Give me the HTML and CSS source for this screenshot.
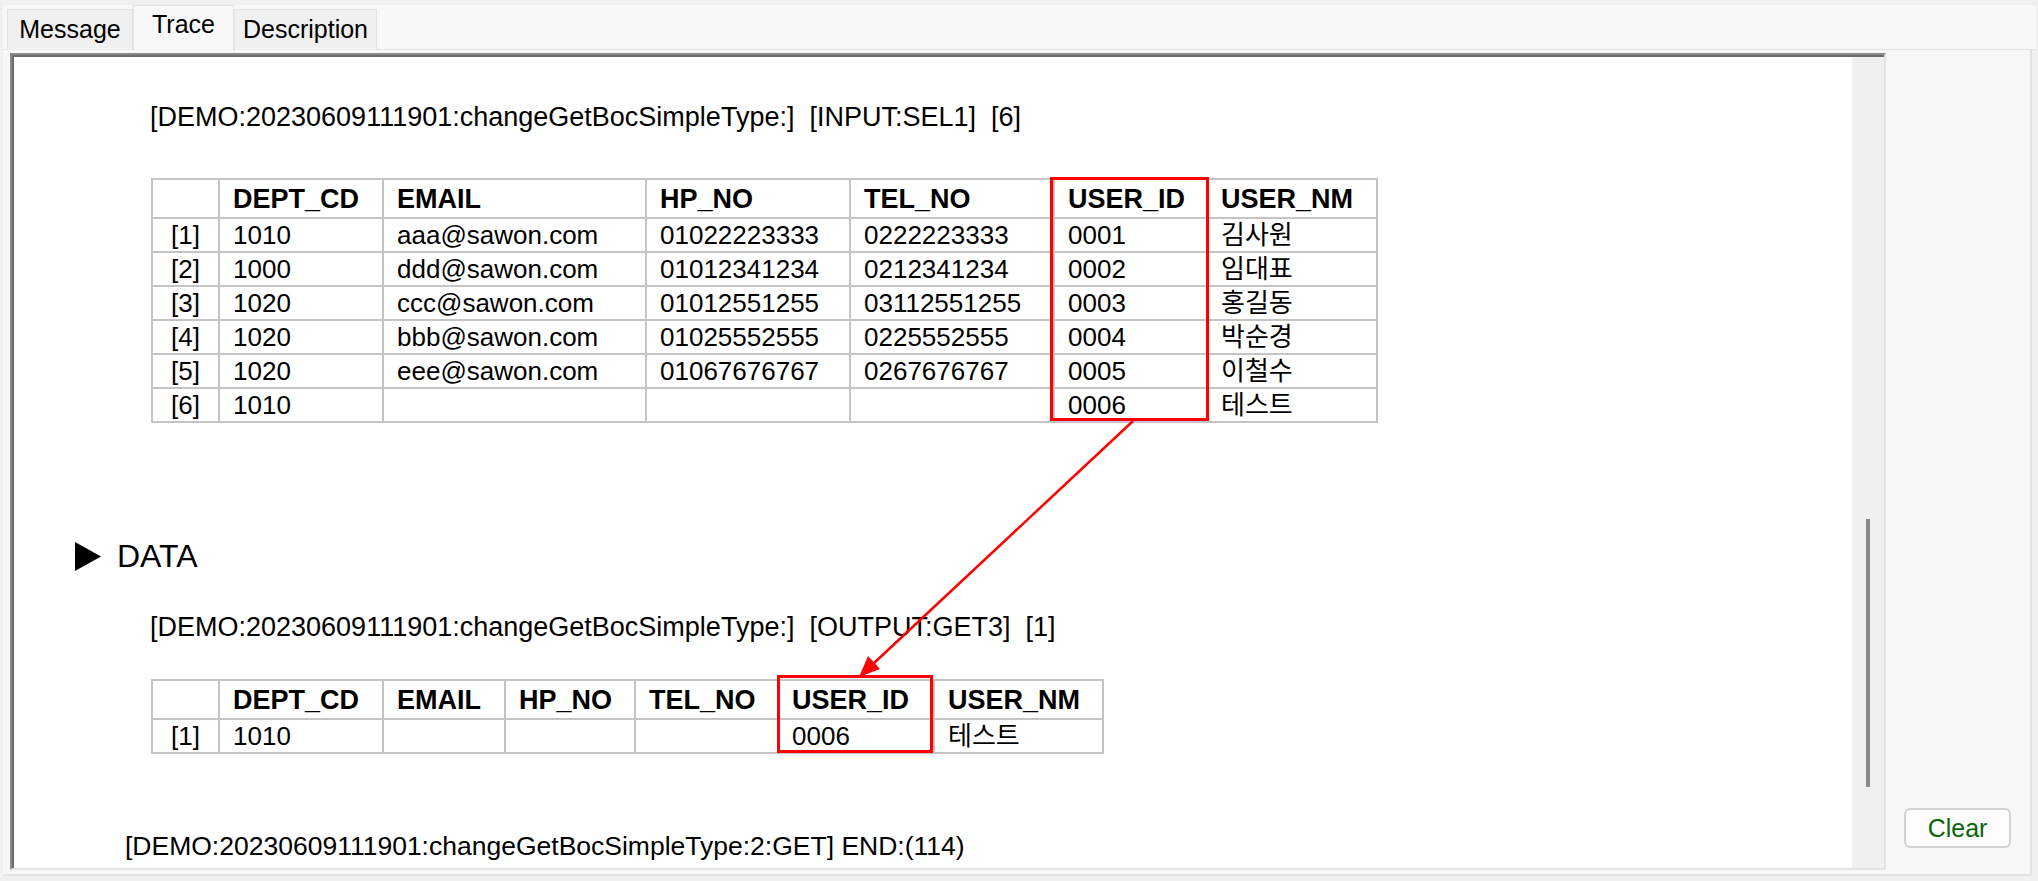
FILE: index.html
```html
<!DOCTYPE html>
<html lang="ko">
<head>
<meta charset="utf-8">
<title>Trace</title>
<link rel="stylesheet" href="styles.css">
</head>
<body>
<div class="app">
  <div class="tabbar">
    <div class="tab tab-message">Message</div>
    <div class="tab tab-trace active">Trace</div>
    <div class="tab tab-desc">Description</div>
  </div>
  <div class="body-row">
    <div class="trace-pane">
      <div class="inset">
        <div class="inset-inner">
          <div class="viewport">
            <div class="log">
              <p class="msg msg-first">[DEMO:20230609111901:changeGetBocSimpleType:]  [INPUT:SEL1]  [6]</p>
              <div class="grid-wrap grid-wide">
                <table class="grid">
                  <colgroup>
                    <col class="c-idx"><col class="c-dept"><col class="c-email"><col class="c-hp"><col class="c-tel"><col class="c-uid"><col class="c-unm">
                  </colgroup>
                  <thead>
                    <tr><th class="idx"></th><th>DEPT_CD</th><th>EMAIL</th><th>HP_NO</th><th>TEL_NO</th><th>USER_ID</th><th>USER_NM</th></tr>
                  </thead>
                  <tbody>
                    <tr><td class="idx">[1]</td><td>1010</td><td>aaa@sawon.com</td><td>01022223333</td><td>0222223333</td><td>0001</td><td>김사원</td></tr>
                    <tr><td class="idx">[2]</td><td>1000</td><td>ddd@sawon.com</td><td>01012341234</td><td>0212341234</td><td>0002</td><td>임대표</td></tr>
                    <tr><td class="idx">[3]</td><td>1020</td><td>ccc@sawon.com</td><td>01012551255</td><td>03112551255</td><td>0003</td><td>홍길동</td></tr>
                    <tr><td class="idx">[4]</td><td>1020</td><td>bbb@sawon.com</td><td>01025552555</td><td>0225552555</td><td>0004</td><td>박순경</td></tr>
                    <tr><td class="idx">[5]</td><td>1020</td><td>eee@sawon.com</td><td>01067676767</td><td>0267676767</td><td>0005</td><td>이철수</td></tr>
                    <tr><td class="idx">[6]</td><td>1010</td><td></td><td></td><td></td><td>0006</td><td>테스트</td></tr>
                  </tbody>
                </table>
                <div class="mark mark-wide"></div>
              </div>
              <h2 class="section"><svg class="tri" viewBox="0 0 26 29" width="26" height="29"><polygon points="0,0 26,14.5 0,29" fill="#000"/></svg><span>DATA</span></h2>
              <p class="msg msg-second">[DEMO:20230609111901:changeGetBocSimpleType:]  [OUTPUT:GET3]  [1]</p>
              <div class="grid-wrap grid-narrow">
                <table class="grid">
                  <colgroup>
                    <col class="c-idx"><col class="c-dept"><col class="n-email"><col class="n-hp"><col class="n-tel"><col class="n-uid"><col class="n-unm">
                  </colgroup>
                  <thead>
                    <tr><th class="idx"></th><th>DEPT_CD</th><th>EMAIL</th><th>HP_NO</th><th>TEL_NO</th><th>USER_ID</th><th>USER_NM</th></tr>
                  </thead>
                  <tbody>
                    <tr><td class="idx">[1]</td><td>1010</td><td></td><td></td><td></td><td>0006</td><td>테스트</td></tr>
                  </tbody>
                </table>
                <div class="mark mark-narrow"></div>
              </div>
              <p class="msg msg-end">[DEMO:20230609111901:changeGetBocSimpleType:2:GET] END:(114)</p>
              <svg class="arrow" width="1838" height="811" viewBox="0 0 1838 811">
                <line x1="1119" y1="364" x2="859" y2="607" stroke="#f00" stroke-width="2.5"/>
                <polygon points="845,620 854,599 866,612" fill="#f00"/>
              </svg>
            </div>
          </div>
          <div class="vscroll"><div class="thumb"></div></div>
        </div>
      </div>
    </div>
    <div class="side">
      <button class="clear" type="button">Clear</button>
    </div>
  </div>
</div>
</body>
</html>
```
FILE: styles.css
```css
* { box-sizing: border-box; }
html, body { margin: 0; padding: 0; }
body {
  width: 2038px;
  height: 881px;
  overflow: hidden;
  background: #f0f0f0;
  color: #000;
  font-family: "Liberation Sans", Arial, "Noto Sans CJK KR", sans-serif;
}
.app { padding: 5px 2px 0 3px; }

/* tabs */
.tabbar {
  height: 45px;
  background: #f8f8f8;
  border-bottom: 1px solid #e3e3e3;
  display: flex;
  align-items: flex-end;
  padding-left: 4px;
}
.tab {
  flex: none;
  height: 41px;
  margin-bottom: -1px;
  background: #f0f0f0;
  border: 1px solid #e3e3e3;
  border-bottom: none;
  font-size: 25px;
  line-height: 38px;
  text-align: center;
}
.tab.active {
  height: 45px;
  background: #f8f8f8;
  line-height: 36px;
}
.tab-message { width: 126px; }
.tab-trace { width: 101px; }
.tab-desc { width: 143px; }

/* body */
.body-row { display: flex; height: 826px; }
.trace-pane {
  width: 1883px;
  background: #f8f8f8;
  padding: 3px 0 0 7px;
  border-bottom: 2px solid #e3e3e3;
}
.inset {
  width: 1876px;
  height: 817px;
  border-top: 2px solid #8a8a8a;
  border-left: 2px solid #8a8a8a;
  border-right: 2px solid #e3e3e3;
  border-bottom: 2px solid #e3e3e3;
}
.inset-inner {
  height: 100%;
  border-top: 2px solid #6b6b6b;
  border-left: 2px solid #6b6b6b;
  display: flex;
}
.viewport {
  width: 1838px;
  height: 100%;
  background: #fff;
  overflow: hidden;
}
.vscroll {
  width: 32px;
  height: 100%;
  background: #f0f0f0;
  padding-left: 14px;
}
.thumb {
  width: 4px;
  height: 268px;
  margin-top: 462px;
  background: #8a8a8a;
}

.side {
  width: 146px;
  background: #f8f8f8;
  border-right: 2px solid #e3e3e3;
  border-bottom: 2px solid #e3e3e3;
  display: flex;
  flex-direction: column;
  justify-content: flex-end;
  padding: 0 0 26px 18px;
}
.clear {
  width: 107px;
  height: 40px;
  border: 2px solid #d2d2d2;
  border-radius: 6px;
  background: #fdfdfd;
  color: #0a650a;
  font-family: "Liberation Sans", Arial, sans-serif;
  font-size: 25px;
  line-height: 34px;
  padding: 0;
}

/* log content */
.log {
  position: relative;
  height: 100%;
  padding-top: 43px;
}
.msg {
  margin: 0 0 0 136px;
  font-size: 27px;
  line-height: 34px;
  white-space: pre;
}
.msg-second { margin-top: 34px; }
.msg-end { margin: 75px 0 0 111px; font-size: 26.5px; }

.grid-wrap { position: relative; margin: 44px 0 0 137px; }
.grid-wide { width: 1225px; }
.grid-narrow { width: 951px; margin-top: 35px; }
.grid {
  border-collapse: collapse;
  table-layout: fixed;
  width: 100%;
}
.grid th, .grid td {
  border: 2px solid #c4c4c4;
  padding: 0 0 0 13px;
  text-align: left;
  white-space: nowrap;
  overflow: hidden;
  vertical-align: middle;
}
.grid th { height: 39px; font-size: 27px; font-weight: bold; line-height: 30px; }
.grid td { height: 34px; font-size: 26px; line-height: 30px; }
.grid .idx { text-align: center; padding: 0; }

.c-idx { width: 67px; }
.c-dept { width: 164px; }
.c-email { width: 263px; }
.c-hp { width: 204px; }
.c-tel { width: 204px; }
.c-uid { width: 153px; }
.c-unm { width: 170px; }
.n-email { width: 122px; }
.n-hp { width: 130px; }
.n-tel { width: 143px; }
.n-uid { width: 156px; }
.n-unm { width: 169px; }

.mark {
  position: absolute;
  border: 3px solid #f00;
}
.mark-wide { left: 899px; top: -1px; width: 159px; height: 244px; }
.mark-narrow { left: 626px; top: -4px; width: 156px; height: 78px; }

.section {
  margin: 113px 0 0 61px;
  height: 40px;
  display: flex;
  align-items: center;
  gap: 16px;
  font-size: 32px;
  font-weight: normal;
  line-height: 40px;
}
.tri { flex: none; }

.arrow {
  position: absolute;
  left: 0;
  top: 0;
  pointer-events: none;
}
```
